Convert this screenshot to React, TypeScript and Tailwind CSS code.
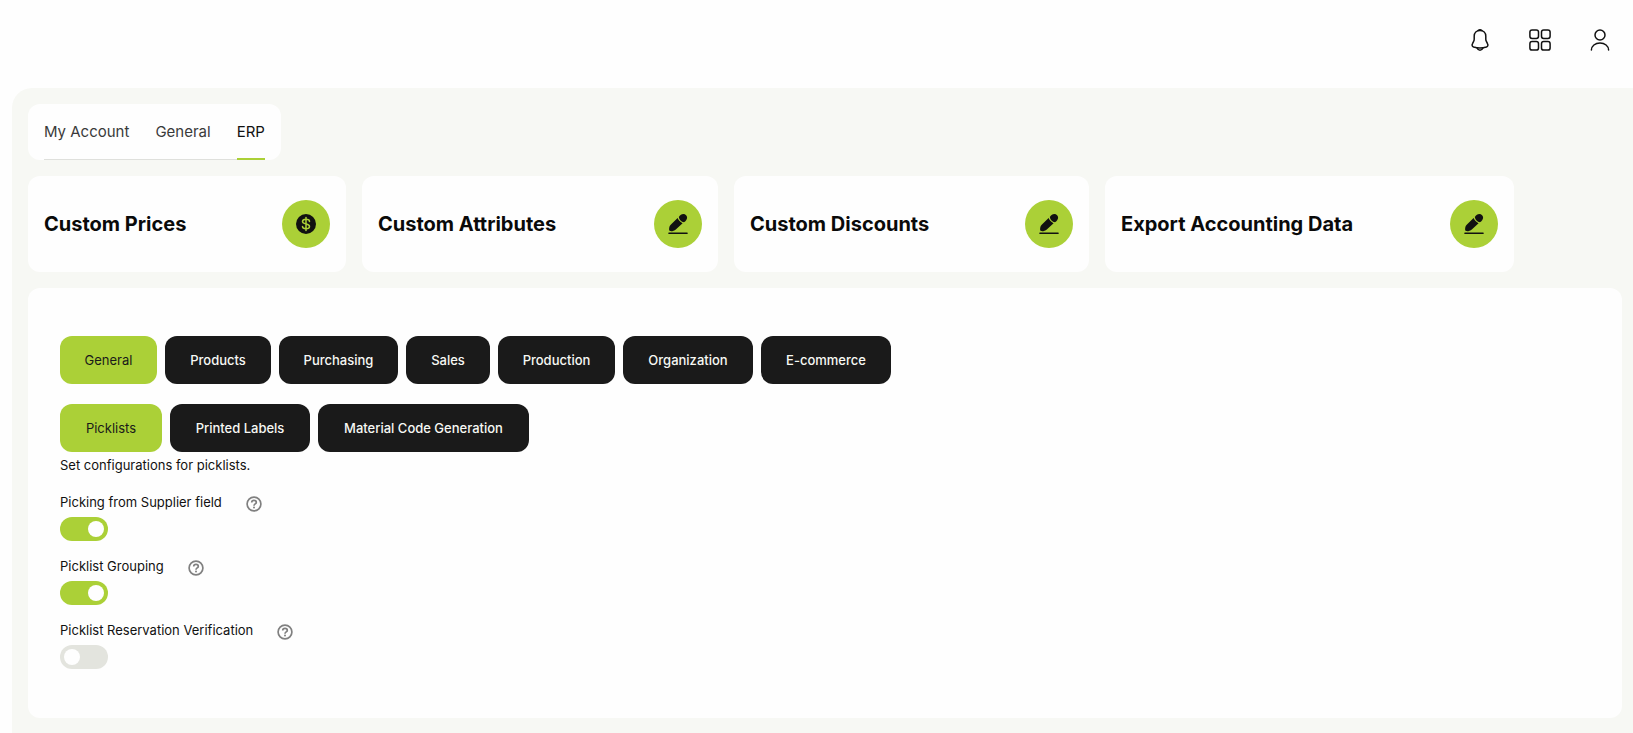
import { useState } from "react";

const tabs = ["My Account", "General", "ERP"];

const shortcuts = [
  { title: "Custom Prices", icon: "dollar", width: "w-[318px]" },
  { title: "Custom Attributes", icon: "pen", width: "w-[356px]" },
  { title: "Custom Discounts", icon: "pen", width: "w-[355px]" },
  { title: "Export Accounting Data", icon: "pen", width: "w-[409px]" },
];

const sections = [
  { label: "General", width: "min-w-[97px]" },
  { label: "Products", width: "min-w-[106px]" },
  { label: "Purchasing", width: "min-w-[119px]" },
  { label: "Sales", width: "min-w-[84px]" },
  { label: "Production", width: "min-w-[117px]" },
  { label: "Organization", width: "min-w-[130px]" },
  { label: "E-commerce", width: "min-w-[130px]" },
];

const subsections = [
  { label: "Picklists", width: "min-w-[102px]" },
  { label: "Printed Labels", width: "min-w-[140px]" },
  { label: "Material Code Generation", width: "min-w-[211px]" },
];

const settings = [
  { id: "supplier", label: "Picking from Supplier field", on: true },
  { id: "grouping", label: "Picklist Grouping", on: true },
  { id: "verification", label: "Picklist Reservation Verification", on: false },
];

function BellIcon() {
  return (
    <svg viewBox="0 0 24 24" className="size-6" fill="none" stroke="currentColor" strokeWidth="1.5" strokeLinecap="round" strokeLinejoin="round" aria-hidden="true">
      <path d="M12 2.4C8.6 2.4 6.2 4.9 6.2 8.2V11.2C6.2 12 5.9 12.9 5.5 13.6L4.4 15.8C3.7 17.1 4.2 18.5 5.6 19C9.8 20.3 14.2 20.3 18.4 19C19.8 18.5 20.3 17.1 19.6 15.8L18.5 13.6C18.1 12.9 17.8 12 17.8 11.2V8.2C17.8 4.9 15.4 2.4 12 2.4Z" />
      <path d="M10 2.5C11.2 1.6 12.8 1.6 14 2.5" />
      <path d="M9 19.9C9.7 21.4 10.7 22.2 12 22.2C13.3 22.2 14.3 21.4 15 19.9" />
    </svg>
  );
}

function AppsIcon() {
  return (
    <svg viewBox="0 0 24 24" className="size-6" fill="none" stroke="currentColor" strokeWidth="1.5" aria-hidden="true">
      <rect x="1.9" y="1.9" width="8.6" height="8.6" rx="2.2" />
      <rect x="13.5" y="1.9" width="8.6" height="8.6" rx="2.2" />
      <rect x="1.9" y="13.5" width="8.6" height="8.6" rx="2.2" />
      <rect x="13.5" y="13.5" width="8.6" height="8.6" rx="2.2" />
    </svg>
  );
}

function UserIcon() {
  return (
    <svg viewBox="0 0 24 24" className="size-6" fill="none" stroke="currentColor" strokeWidth="1.5" strokeLinecap="round" aria-hidden="true">
      <circle cx="12" cy="7" r="5" />
      <path d="M3.4 22C3.4 18.1 7.2 15 12 15S20.6 18.1 20.6 22" />
    </svg>
  );
}

function DollarIcon() {
  return (
    <svg viewBox="0 0 24 24" className="size-6" fill="none" aria-hidden="true">
      <circle cx="12" cy="12" r="10" fill="#111111" />
      <path d="M12 5.5V18.5M15.5 9.4C15.5 8.2 14.2 7.3 12 7.3S8.5 8.2 8.5 9.6C8.5 12.9 15.5 11.1 15.5 14.4C15.5 15.8 14.2 16.7 12 16.7S8.5 15.8 8.5 14.6" stroke="#abd037" strokeWidth="1.5" strokeLinecap="round" />
    </svg>
  );
}

function PenIcon() {
  return (
    <svg viewBox="0 0 24 24" className="size-6" fill="#111111" aria-hidden="true">
      <path d="M11.6 6C12.2 7.8 14.6 10.4 16.6 11.2L9.8 17.4C8.4 18.8 5.8 19.4 4.4 19.1C3.2 18.9 3.1 17.9 3.1 17.2C3.2 15.6 3.4 13.9 4.7 12.7Z" />
      <path d="M12.8 4.9C14 3.2 15.6 1.9 17.4 1.9C19.5 2 21.1 3.6 21.1 5.7C21.1 7.6 19.6 9.2 17.9 10.2C15.3 9.8 13.2 7.7 12.8 4.9Z" />
      <rect x="2.2" y="20.6" width="19.6" height="1.5" rx="0.75" />
    </svg>
  );
}

function HelpIcon() {
  return (
    <svg viewBox="0 0 16 16" className="size-4" fill="none" stroke="currentColor" strokeWidth="1.7" aria-hidden="true">
      <circle cx="8" cy="8" r="6.9" />
      <path d="M5.7 6.5C5.7 5.2 6.7 4.4 8 4.4S10.3 5.2 10.3 6.4C10.3 7.9 8 8 8 9.7" />
      <circle cx="8" cy="11.6" r="1" fill="currentColor" stroke="none" />
    </svg>
  );
}

type PillItem = { label: string; width: string };

function Pills({ items, active, onSelect, name }: { items: PillItem[]; active: string; onSelect: (label: string) => void; name: string }) {
  return (
    <nav aria-label={name} className="flex flex-wrap gap-2">
      {items.map((item) => (
        <button
          key={item.label}
          type="button"
          onClick={() => onSelect(item.label)}
          className={`h-12 rounded-xl pt-px text-center text-[13px] ${item.width} ${
            item.label === active ? "bg-[#abd037] text-[#1a1a1a]" : "bg-[#1a1a1a] font-medium text-[#f7f8f4]"
          }`}
        >
          {item.label}
        </button>
      ))}
    </nav>
  );
}

export default function App() {
  const [tab, setTab] = useState("ERP");
  const [section, setSection] = useState("General");
  const [subsection, setSubsection] = useState("Picklists");

  return (
    <div className="flex min-h-screen flex-col bg-[#fefefe] font-['Inter',sans-serif] text-[#111111]">
      <header className="flex justify-end gap-9 pt-7 pr-[21px] pb-9">
        <button type="button" aria-label="Notifications"><BellIcon /></button>
        <button type="button" aria-label="Apps"><AppsIcon /></button>
        <button type="button" aria-label="Profile"><UserIcon /></button>
      </header>

      <main className="ml-3 flex grow flex-col items-start gap-4 rounded-tl-[20px] bg-[#f7f8f4] p-4 pr-[11px] pb-[15px]">
        <div className="rounded-xl bg-[#fefefe] px-4">
          <nav aria-label="Settings" className="flex h-14 gap-[26px] shadow-[inset_0_-1px_0_#dfe0dc]">
            {tabs.map((item) => (
              <button
                key={item}
                type="button"
                onClick={() => setTab(item)}
                className={`border-b-2 pt-[3px] text-[15px] ${item === tab ? "border-[#abd037] text-[#111111]" : "border-transparent text-[#3a3a3a]"}`}
              >
                {item}
              </button>
            ))}
          </nav>
        </div>

        <div className="flex flex-wrap gap-4">
          {shortcuts.map((card) => (
            <section key={card.title} className={`flex h-24 items-center justify-between rounded-xl bg-[#fefefe] px-4 ${card.width}`}>
              <h2 className="text-xl font-bold text-[#0a0a0a]">{card.title}</h2>
              <button type="button" aria-label={`Open ${card.title}`} className="flex size-12 items-center justify-center rounded-full bg-[#abd037]">
                {card.icon === "dollar" ? <DollarIcon /> : <PenIcon />}
              </button>
            </section>
          ))}
        </div>

        <section className="w-full grow rounded-xl bg-[#fefefe] px-8 py-12">
          <div className="flex flex-col gap-5">
            <Pills name="Sections" items={sections} active={section} onSelect={setSection} />
            <Pills name="Subsections" items={subsections} active={subsection} onSelect={setSubsection} />
          </div>
          <p className="mt-1 text-[13px] leading-[18px]">Set configurations for picklists.</p>
          <div className="mt-[19px] flex flex-col gap-4">
            {settings.map((setting) => (
              <div key={setting.id}>
                <div className="flex h-6 items-start gap-6">
                  <label htmlFor={setting.id} className="text-[13px] leading-[18px]">{setting.label}</label>
                  <button type="button" aria-label={`About ${setting.label}`} className="pt-[3px] text-[#808080]">
                    <HelpIcon />
                  </button>
                </div>
                <input
                  id={setting.id}
                  type="checkbox"
                  role="switch"
                  defaultChecked={setting.on}
                  className="flex h-6 w-12 appearance-none items-center rounded-full bg-[#e3e4de] px-1 before:size-4 before:rounded-full before:bg-[#fefefe] checked:justify-end checked:bg-[#abd037]"
                />
              </div>
            ))}
          </div>
        </section>
      </main>
    </div>
  );
}
